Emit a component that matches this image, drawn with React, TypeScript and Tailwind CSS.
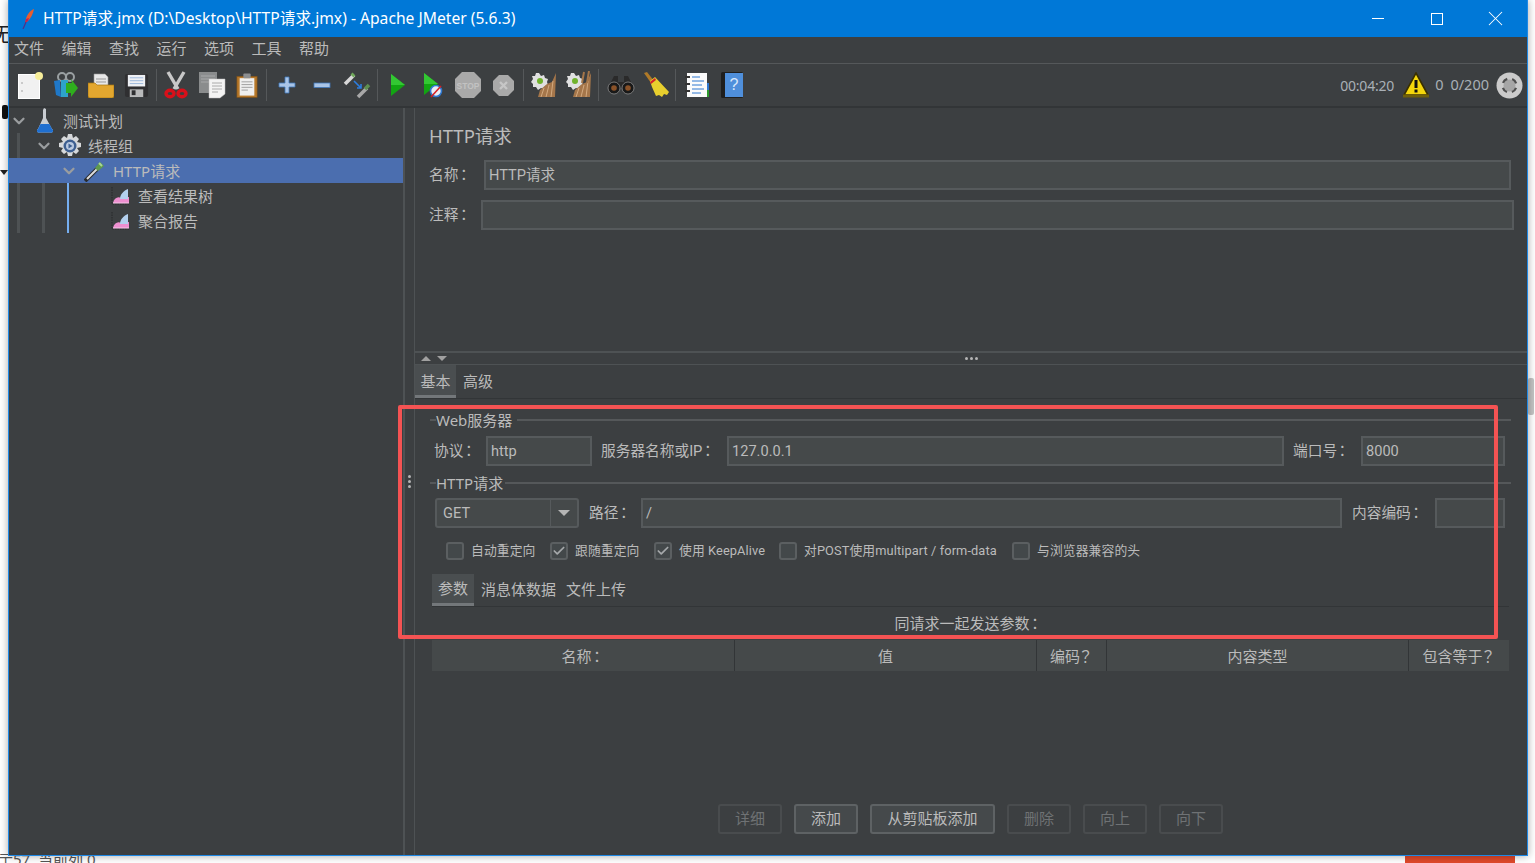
import type { ReactNode } from "react";
import { Check, ChevronDown, X } from "lucide-react";

const Sep = ({ className = "mx-[2px]" }: { className?: string }) => <div className={`my-[3px] w-px h-[32px] bg-[#55585a] ${className}`} />;

const Slot = ({ children }: { children: ReactNode }) => (
  <div className="w-[35.2px] h-[43px] flex items-center justify-center shrink-0 [&>svg]:shrink-0">{children}</div>
);

// fullwidth colon and question mark sit in the middle of the cell, as in the TC cut
const P = ({ c }: { c: string }) => <span className="ml-[-2px] font-['Noto_Sans_CJK_TC',sans-serif]">{c}</span>;

const NewIcon = () => (
  <svg width="27" height="28" viewBox="0 0 27 28">
    <rect x="1.5" y="3.5" width="21" height="24" fill="#f1f1f1" stroke="#fff" />
    <circle cx="5" cy="12" r="0.8" fill="#999" />
    <circle cx="5" cy="20" r="0.8" fill="#999" />
    <circle cx="22" cy="5" r="4" fill="#f7ee9a" />
  </svg>
);
const TemplatesIcon = () => (
  <svg width="26" height="28" viewBox="0 0 26 28">
    <circle cx="9" cy="6" r="4" fill="none" stroke="#9aa0a2" strokeWidth="2" />
    <circle cx="17" cy="6" r="4" fill="none" stroke="#9aa0a2" strokeWidth="2" />
    <path d="M1 10l6-1 1 17-5-2z" fill="#1f78c8" />
    <path d="M8 9h7v17H8z" fill="#2ea3c9" />
    <path d="M13 12h6l-1-4 7 9-7 9v-4h-5z" fill="#2fae1d" />
  </svg>
);
const OpenIcon = () => (
  <svg width="26" height="25" viewBox="0 0 26 25">
    <path d="M6 1h11l3 3v10H6z" fill="#e8e8e8" stroke="#999" strokeWidth="0.6" />
    <path d="M8 6h10M8 9h10" stroke="#999" />
    <path d="M0 10h7l2 2h17v11a2 2 0 0 1-2 2H2a2 2 0 0 1-2-2z" fill="#e3a72f" stroke="#a6760f" strokeWidth="0.7" />
  </svg>
);
const SaveIcon = () => (
  <svg width="25" height="25" viewBox="0 0 26 26">
    <rect x="1" y="1" width="24" height="24" rx="2" fill="#2f2f31" />
    <rect x="4" y="2" width="18" height="12" fill="#eef0f4" />
    <path d="M6 5h14M6 8h14M6 11h14" stroke="#9cb8dc" />
    <rect x="6" y="17" width="14" height="8" fill="#b9babb" />
    <rect x="8" y="18" width="4" height="5" fill="#2f2f31" />
  </svg>
);
const CutIcon = () => (
  <svg width="24" height="28" viewBox="0 0 24 28">
    <path d="M4 1l10 17M20 1L10 18" stroke="#c8c8c8" strokeWidth="3.4" />
    <ellipse cx="6" cy="22.5" rx="4" ry="3.2" fill="none" stroke="#d8101a" strokeWidth="3.4" />
    <ellipse cx="18" cy="22.5" rx="4" ry="3.2" fill="none" stroke="#d8101a" strokeWidth="3.4" />
  </svg>
);
const CopyIcon = () => (
  <svg width="28" height="28" viewBox="0 0 28 28">
    <rect x="1" y="1" width="18" height="21" fill="#8a8c8d" />
    <path d="M3 5h14M3 8h14M3 11h14" stroke="#a8a9aa" />
    <path d="M11 8h16v15l-5 4H11z" fill="#f3f3f3" stroke="#bbb" strokeWidth="0.5" />
    <path d="M14 12h10M14 15h10M14 18h10M14 21h6" stroke="#aaa" />
  </svg>
);
const PasteIcon = () => (
  <svg width="22" height="27" viewBox="0 0 24 28">
    <rect x="1" y="4" width="22" height="23" fill="#b6782a" stroke="#7f5118" strokeWidth="0.7" />
    <rect x="4" y="6" width="16" height="19" fill="#efefef" />
    <rect x="8" y="1" width="8" height="5" rx="1" fill="#8c8e90" />
    <path d="M6 10h12M6 13h12M6 16h12M6 19h7" stroke="#9a9a9a" />
  </svg>
);
const PlusIcon = () => (
  <svg width="18" height="18" viewBox="0 0 18 18">
    <path d="M7 1h4v6h6v4h-6v6H7v-6H1V7h6z" fill="#a9c4e6" stroke="#3f78bb" strokeWidth="0.8" />
  </svg>
);
const MinusIcon = () => (
  <svg width="18" height="18" viewBox="0 0 18 18">
    <rect x="1" y="7" width="16" height="4.5" fill="#a9c4e6" stroke="#3f78bb" strokeWidth="0.8" />
  </svg>
);
const ToggleIcon = () => (
  <svg width="28" height="28" viewBox="0 0 28 28">
    <path d="M2 13L11 4" stroke="#d8d8d8" strokeWidth="3.5" />
    <path d="M9 5l2-2" stroke="#6fa85a" strokeWidth="4" />
    <path d="M15 26l9-9" stroke="#a8a8a8" strokeWidth="3.5" />
    <path d="M22 18l4-4" stroke="#5e8f50" strokeWidth="3.5" />
    <path d="M11 10l7 7M18 13v4h-4" stroke="#2b7de0" strokeWidth="1.6" fill="none" />
  </svg>
);
const RunIcon = () => (
  <svg className="ml-[2px]" width="16" height="24" viewBox="0 0 16 24">
    <path d="M1 1l14 11L1 23z" fill="#12a512" />
    <path d="M1 1l14 11H1z" fill="#33c733" />
  </svg>
);
const RunNoPauseIcon = () => (
  <svg className="ml-[1px]" width="20" height="26" viewBox="0 0 20 26">
    <path d="M1 1l14 11L1 23z" fill="#12a512" />
    <path d="M1 1l14 11H1z" fill="#33c733" />
    <circle cx="13" cy="19" r="5.5" fill="#e9eef5" stroke="#2f78d0" strokeWidth="1.6" />
    <path d="M8 25l10-11" stroke="#d51f26" strokeWidth="1.6" />
  </svg>
);
const StopIcon = () => (
  <svg width="28" height="28" viewBox="0 0 28 28">
    <path d="M8 1h12l7 7v12l-7 7H8l-7-7V8z" fill="#a9a9a9" />
    <text x="14" y="17.5" textAnchor="middle" fontSize="8.5" fontFamily="Liberation Sans, sans-serif" fontWeight="700" fill="#c2c2c2">
      STOP
    </text>
  </svg>
);
const ShutdownIcon = () => (
  <svg width="23" height="23" viewBox="0 0 23 23">
    <path d="M7 1h9l6 6v9l-6 6H7l-6-6V7z" fill="#a9a9a9" />
    <path d="M8 8l7 7M15 8l-7 7" stroke="#c6c6c6" strokeWidth="2.4" />
  </svg>
);
const ClearIcon = ({ all }: { all?: boolean }) => (
  <svg width="28" height="28" viewBox="0 0 28 28">
    <path d="M10 2l2 3 3-1 1 3 3 1-1 3 1 3-3 1-1 3-3-1-3 2-2-3-3 0 0-3-2-2 2-3-1-3 3 0 1-3z" fill="#e0e0e0" />
    <circle cx="11" cy="10" r="3" fill="#70b22c" />
    <path d="M27 2l-1 24H9l2-7 7-6 5-2z" fill="#a5764a" />
    <path d="M15 17l-3 9M20 14l-3 12M24 10l-2 16" stroke="#d3aa80" />
    {all && <path d="M20 1l-2 11M25 0l-2 12" stroke="#a5764a" strokeWidth="2" />}
  </svg>
);
const SearchIcon = () => (
  <svg width="28" height="20" viewBox="0 0 28 20">
    <path d="M7 1h4v6h6V1h4l6 12H1z" fill="#2a2a2a" />
    <circle cx="7" cy="13" r="6" fill="#191919" stroke="#999" strokeWidth="0.7" />
    <circle cx="21" cy="13" r="6" fill="#191919" stroke="#999" strokeWidth="0.7" />
    <circle cx="7" cy="13" r="2.8" fill="#8a5228" />
    <circle cx="21" cy="13" r="2.8" fill="#8a5228" />
  </svg>
);
const BroomIcon = () => (
  <svg width="28" height="28" viewBox="0 0 28 28">
    <path d="M2 2l3-1 7 9-3 2z" fill="#b07a28" />
    <path d="M8 10l5-4 14 15-2 3-3-1-2 3-3-2-3 1-4-9z" fill="#e8cf2e" />
    <path d="M8 11l5-4 1 2-5 4z" fill="#d3232a" />
  </svg>
);
const FunctionIcon = () => (
  <svg width="26" height="26" viewBox="0 0 26 26">
    <rect x="3" y="1" width="20" height="24" fill="#fbfbfb" />
    <rect x="23" y="11" width="2" height="7" fill="#2f78d0" />
    <rect x="23" y="18" width="2" height="7" fill="#2e9b2e" />
    <path d="M8 5h8M8 9h12M8 13h10M8 17h12M8 21h9" stroke="#2f78d0" />
    <path d="M1 5h5M1 12h5M1 19h5" stroke="#333" strokeWidth="2" />
  </svg>
);
const HelpIcon = () => (
  <svg width="22" height="26" viewBox="0 0 22 26">
    <rect x="0" y="0" width="22" height="26" rx="1.5" fill="#1f1f1f" />
    <rect x="4" y="1" width="18" height="24" fill="#4f8fdb" />
    <text x="13" y="18" textAnchor="middle" fontSize="16" fontFamily="Liberation Sans, sans-serif" fill="#d9e8fa">
      ?
    </text>
  </svg>
);
const WarnIcon = () => (
  <svg width="28" height="26" viewBox="0 0 28 26">
    <path d="M14 1L26 23H2z" fill="#f4d60c" stroke="#3a3000" strokeWidth="1.6" />
    <rect x="1" y="22.5" width="26" height="3" fill="#6f5f0c" />
    <rect x="12.5" y="8" width="3" height="8" fill="#111" />
    <rect x="12.5" y="17.5" width="3" height="3" fill="#111" />
  </svg>
);
const ExpandIcon = () => (
  <svg width="27" height="27" viewBox="0 0 27 27">
    <circle cx="13.5" cy="13.5" r="13" fill="#cbcbcb" />
    <circle cx="13.5" cy="13.5" r="6" fill="#a6a6a6" />
    <circle cx="13.5" cy="13.5" r="7" fill="none" stroke="#4f4f4f" strokeWidth="2.2" strokeDasharray="6 5" strokeDashoffset="-2.5" />
  </svg>
);
const Feather = () => (
  <svg width="13" height="20" viewBox="0 0 13 20">
    <path d="M12 0C9 1 5 5 4 10l-1 4 3-2c3-3 5-7 6-12z" fill="#e85d2f" />
    <path d="M4 10l-1 4 3-2 1-3z" fill="#c81f4f" />
    <path d="M4 13L1 20" stroke="#50308a" strokeWidth="1.2" />
  </svg>
);
const PlanIcon = () => (
  <svg width="16" height="25" viewBox="0 0 16 25">
    <path d="M7 0l2 1v9l6 11a2 2 0 0 1-2 3.5H3A2 2 0 0 1 1 21l5-11V2z" fill="#c9cdd2" />
    <path d="M3.5 16h9l2.5 5a2 2 0 0 1-2 3.5H3A2 2 0 0 1 1 21z" fill="#1f6fd0" />
  </svg>
);
const GearIcon = () => (
  <svg width="24" height="24" viewBox="0 0 24 24">
    <path d="M10 0h4l1 4 3-2 3 3-2 3 4 1v4l-4 1 2 3-3 3-3-2-1 4h-4l-1-4-3 2-3-3 2-3-4-1v-4l4-1-2-3 3-3 3 2z" fill="#d6d8da" />
    <circle cx="12" cy="12" r="6.5" fill="#3d5f91" />
    <circle cx="12" cy="12" r="4" fill="#b9c9e0" />
    <path d="M10.5 9.5l4 2.5-4 2.5z" fill="#3d5f91" />
  </svg>
);
const SamplerIcon = () => (
  <svg width="22" height="22" viewBox="0 0 22 22">
    <path d="M1 21L13 9" stroke="#2a2c2e" strokeWidth="4" />
    <path d="M3 19L13 9" stroke="#dcdcdc" strokeWidth="2" />
    <path d="M11 8l5-6 4 4-6 5z" fill="#5f9a4d" />
    <path d="M15 3l3 3" stroke="#a9d696" strokeWidth="2" />
  </svg>
);
const ListenerIcon = () => (
  <svg width="19" height="18" viewBox="0 0 19 18">
    <path d="M1 0v17h18" fill="none" stroke="#26282a" strokeDasharray="1.5 1" />
    <path d="M2 16c1-5 5-7 8-5l8-1v6z" fill="#ee8fd0" />
    <path d="M9 12c0-4 3-8 8-10v10z" fill="#b3d0ee" />
    <path d="M2 16h16" stroke="#f6c6e8" />
  </svg>
);

const TreeRow = ({
  depth,
  icon,
  label,
  open,
  selected,
}: {
  depth: number;
  icon: ReactNode;
  label: string;
  open?: boolean;
  selected?: boolean;
}) => (
  <div className={`flex h-[25px] items-stretch ${selected ? "bg-[#4b6eaf]" : ""}`}>
    {Array.from({ length: depth }).map((_, i) => (
      <div key={i} className="w-[25px] shrink-0 pl-[8px]">
        {!selected && <div className={`h-full ${i === 2 ? "w-[2px] bg-[#75aef0]" : "w-[3px] bg-[#4e5254]"}`} />}
      </div>
    ))}
    <div className="w-[20px] shrink-0 flex items-center justify-center text-[#9a9d9f]">
      {open && <ChevronDown size={18} strokeWidth={3} />}
    </div>
    <div className="ml-[6px] w-[20px] shrink-0 flex items-center justify-center [&>svg]:shrink-0">{icon}</div>
    <span className="ml-[8px] text-[15px] leading-[26px] text-[#bbbbbb]">{label}</span>
  </div>
);

const Field = ({ value, className }: { value?: string; className: string }) => (
  <div
    className={`h-[30px] flex items-center px-[3px] pt-[2px] bg-[#45494a] border-2 border-[#565a5c] font-['Roboto','Noto_Sans_CJK_SC',sans-serif] text-[14.6px] text-[#bbbbbb] ${className}`}
  >
    {value}
  </div>
);

const Label = ({ text, className = "" }: { text: string; className?: string }) => (
  <span className={`font-['Roboto','Noto_Sans_CJK_SC',sans-serif] text-[14.7px] text-[#bbbbbb] whitespace-nowrap ${className}`}>
    {text}
    <P c="：" />
  </span>
);

const Legend = ({ title, width }: { title: string; width: string }) => (
  <div className="flex items-center h-[22px] ml-[15px] mr-[16px]">
    <div className="w-[6px] h-[2px] bg-[#55585a]" />
    <span className={`text-[15px] text-[#bbbbbb] whitespace-nowrap ${width}`}>{title}</span>
    <div className="flex-1 h-[2px] bg-[#55585a]" />
  </div>
);

const Tick = ({ label, checked, className }: { label: string; checked?: boolean; className: string }) => (
  <div className={`flex items-center gap-[7px] ${className}`}>
    <div className="w-[18px] h-[18px] rounded-[3px] border-2 border-[#5b5f61] bg-[#43484a] flex items-center justify-center text-[#a5a8aa]">
      {checked && <Check size={14} strokeWidth={3} />}
    </div>
    <span className="pb-[1px] font-['Roboto','Noto_Sans_CJK_SC',sans-serif] text-[12.8px] tracking-[0.1px] text-[#bbbbbb] whitespace-nowrap">{label}</span>
  </div>
);

const Button = ({ label, on, className }: { label: string; on?: boolean; className: string }) => (
  <div
    className={`h-[30px] pb-[1px] rounded-[3px] border-2 flex items-center justify-center text-[15px] ${
      on ? "border-[#5e6264] bg-[#45494b] text-[#bbbbbb]" : "border-[#494c4e] text-[#6f7274]"
    } ${className}`}
  >
    {label}
  </div>
);

const HeadCell = ({ children, className }: { children: ReactNode; className: string }) => (
  <div className={`pt-[1px] flex items-center justify-center text-[15px] text-[#bbbbbb] border-r border-[#323537] ${className}`}>{children}</div>
);

export default function App() {
  return (
    <div className="relative w-[1535px] h-[863px] overflow-hidden bg-white font-['Noto_Sans','Noto_Sans_CJK_SC',sans-serif]">
      {/* desktop behind the window */}
      <span className="absolute left-[-8px] top-[20px] text-[20px] text-[#222]">无</span>
      <div className="absolute left-[2px] top-[105px] w-[6px] h-[14px] rounded-[2px] bg-[#111]" />
      <div className="absolute left-[0px] top-[170px] w-0 h-0 border-x-[4px] border-t-[5px] border-x-transparent border-t-[#222]" />
      <span className="absolute left-[-2px] top-[849px] text-[15px] leading-[20px] text-[#555] whitespace-nowrap">亍57, 当前列 0</span>
      <div className="absolute left-[1405px] top-[855px] w-[110px] h-[8px] bg-[#e0492b]" />
      <div className="absolute left-[1528px] top-[378px] w-[6px] h-[37px] rounded-[2px] bg-[#c4c4c4]" />

      <div className="absolute left-[8px] top-0 w-[1520px] h-[856px] flex flex-col bg-[#3c3f41] border-x border-b border-[#1e88e5] shadow-[0_0_8px_rgba(0,0,0,0.35)]">
        <div className="h-[37px] shrink-0 bg-[#0078d7] flex items-center text-white">
          <div className="ml-[13px] mr-[8px] flex">
            <Feather />
          </div>
          <span className="text-[15.65px] whitespace-nowrap">HTTP请求.jmx (D:\Desktop\HTTP请求.jmx) - Apache JMeter (5.6.3)</span>
          <div className="ml-auto pr-[2px] flex items-center">
            <div className="w-[59px] flex justify-center"><div className="w-[12px] h-px bg-white" /></div>
            <div className="w-[59px] flex justify-center"><div className="w-[12px] h-[12px] border border-white" /></div>
            <div className="w-[59px] flex justify-center"><X size={25} strokeWidth={1} /></div>
          </div>
        </div>

        <div className="h-[27px] shrink-0 flex items-center gap-[17.5px] pl-[5px] pb-[3px] border-b border-[#55585a] text-[15px] text-[#bbbbbb]">
          {["文件", "编辑", "查找", "运行", "选项", "工具", "帮助"].map((m) => (
            <span key={m}>{m}</span>
          ))}
        </div>

        <div className="h-[44px] shrink-0 flex items-center pl-[4px] pr-[4px] border-b-2 border-[#323537]">
          <Slot><NewIcon /></Slot>
          <Slot><TemplatesIcon /></Slot>
          <Slot><OpenIcon /></Slot>
          <Slot><SaveIcon /></Slot>
          <Sep />
          <Slot><CutIcon /></Slot>
          <Slot><CopyIcon /></Slot>
          <Slot><PasteIcon /></Slot>
          <Sep />
          <Slot><PlusIcon /></Slot>
          <Slot><MinusIcon /></Slot>
          <Slot><ToggleIcon /></Slot>
          <Sep />
          <Slot><RunIcon /></Slot>
          <Slot><RunNoPauseIcon /></Slot>
          <Slot><StopIcon /></Slot>
          <Slot><ShutdownIcon /></Slot>
          <Sep />
          <Slot><ClearIcon /></Slot>
          <Slot><ClearIcon all /></Slot>
          <Sep className="ml-[2px] mr-[4px]" />
          <Slot><SearchIcon /></Slot>
          <Slot><BroomIcon /></Slot>
          <Sep className="ml-[2px] mr-[3px]" />
          <Slot><FunctionIcon /></Slot>
          <Slot><HelpIcon /></Slot>
          <div className="ml-auto flex items-center text-[14.5px] text-[#a9b0b6]">
            <span className="text-[14px] tracking-[-0.2px]">00:04:20</span>
            <span className="ml-[8px] flex"><WarnIcon /></span>
            <span className="ml-[5px]">0</span>
            <span className="ml-[7px]">0/200</span>
            <span className="ml-[7px] flex"><ExpandIcon /></span>
          </div>
        </div>

        <div className="flex-1 min-h-0 flex">
          <div className="w-[394px] shrink-0">
            <TreeRow depth={0} open icon={<PlanIcon />} label="测试计划" />
            <TreeRow depth={1} open icon={<GearIcon />} label="线程组" />
            <TreeRow depth={2} open selected icon={<SamplerIcon />} label="HTTP请求" />
            <TreeRow depth={3} icon={<ListenerIcon />} label="查看结果树" />
            <TreeRow depth={3} icon={<ListenerIcon />} label="聚合报告" />
          </div>

          <div className="w-[12px] shrink-0 border-l-2 border-r border-[#4e5254] flex items-center justify-center">
            <div className="flex flex-col gap-[2px]">
              <div className="w-[3px] h-[3px] rounded-full bg-[#b5b5b5]" />
              <div className="w-[3px] h-[3px] rounded-full bg-[#b5b5b5]" />
              <div className="w-[3px] h-[3px] rounded-full bg-[#b5b5b5]" />
            </div>
          </div>

          <div className="flex-1 min-w-0 flex flex-col">
            <div className="h-[245px] shrink-0 pl-[14px] border-b-2 border-[#4e5254]">
              <div className="h-[52px] pt-[4px] flex items-center text-[18.5px] text-[#bbbbbb]">HTTP请求</div>
              <div className="flex items-center h-[30px]">
                <Label text="名称" className="w-[55px]" />
                <Field value="HTTP请求" className="w-[1027px]" />
              </div>
              <div className="flex items-center h-[30px] mt-[10px]">
                <Label text="注释" className="w-[52px]" />
                <Field className="w-[1033px]" />
              </div>
            </div>

            <div className="h-[12px] shrink-0 pb-[1px] relative flex items-center border-b border-[#4e5254] pl-[6px] gap-[6px]">
              <div className="w-0 h-0 border-x-[5px] border-b-[5px] border-x-transparent border-b-[#a0a0a0]" />
              <div className="w-0 h-0 border-x-[5px] border-t-[5px] border-x-transparent border-t-[#a0a0a0]" />
              <div className="ml-[512px] flex gap-[2px]">
                <div className="w-[3px] h-[3px] rounded-full bg-[#b5b5b5]" />
                <div className="w-[3px] h-[3px] rounded-full bg-[#b5b5b5]" />
                <div className="w-[3px] h-[3px] rounded-full bg-[#b5b5b5]" />
              </div>
            </div>

            <div className="h-[34px] shrink-0 flex border-b border-[#323537] text-[15px] text-[#bbbbbb]">
              <div className="w-[41px] pt-[2px] bg-[#4a4e50] border-b-[3px] border-[#73777a] flex items-center justify-center">基本</div>
              <div className="ml-[7px] flex items-center">高级</div>
            </div>

            <div className="pt-[10px]">
              <Legend title="Web服务器" width="w-[81px]" />
              <div className="flex items-center mt-[5px] ml-[19px]">
                <Label text="协议" className="w-[52px]" />
                <Field value="http" className="w-[106px]" />
                <Label text="服务器名称或IP" className="ml-[9px] w-[126px]" />
                <Field value="127.0.0.1" className="w-[557px]" />
                <Label text="端口号" className="ml-[9px] w-[68px]" />
                <Field value="8000" className="w-[144px]" />
              </div>

              <div className="mt-[6px]">
                <Legend title="HTTP请求" width="w-[69px]" />
              </div>
              <div className="flex items-center mt-[4px] ml-[20px]">
                <div className="w-[144px] h-[30px] flex rounded-[3px] border-2 border-[#565a5c] bg-[#45494a] font-['Roboto',sans-serif] text-[14.6px] text-[#bbbbbb]">
                  <div className="w-[113px] pl-[6px] pt-[2px] flex items-center">GET</div>
                  <div className="flex-1 border-l border-[#565a5c] flex items-center justify-center">
                    <div className="w-0 h-0 border-x-[6px] border-t-[6px] border-x-transparent border-t-[#b5b5b5]" />
                  </div>
                </div>
                <Label text="路径" className="ml-[10px] w-[52px]" />
                <Field value="/" className="w-[701px]" />
                <Label text="内容编码" className="ml-[10px] w-[83px]" />
                <Field className="w-[70px]" />
              </div>

              <div className="flex items-center h-[18px] mt-[14px] ml-[31px]">
                <Tick label="自动重定向" className="w-[104px]" />
                <Tick label="跟随重定向" checked className="w-[104px]" />
                <Tick label="使用 KeepAlive" checked className="w-[125px]" />
                <Tick label="对POST使用multipart / form-data" className="w-[233px]" />
                <Tick label="与浏览器兼容的头" className="w-[130px]" />
              </div>

              <div className="h-[33px] mt-[14px] ml-[17px] mr-[18px] flex items-stretch border-b border-[#323537] text-[15px] text-[#bbbbbb]">
                <div className="w-[42px] bg-[#4a4e50] border-b-[3px] border-[#73777a] flex items-center justify-center">参数</div>
                <div className="ml-[7px] pb-[2px] flex items-center">消息体数据</div>
                <div className="ml-[10px] pb-[2px] flex items-center">文件上传</div>
              </div>

              <div className="h-[33px] flex items-center justify-center pr-[5px] text-[15px] text-[#bbbbbb]">
                同请求一起发送参数
                <P c="：" />
              </div>

              <div className="h-[31px] ml-[17px] mr-[18px] flex items-stretch bg-[#45494a]">
                <HeadCell className="w-[303px]">名称<P c="：" /></HeadCell>
                <HeadCell className="w-[302px]">值</HeadCell>
                <HeadCell className="w-[70px]">编码<P c="？" /></HeadCell>
                <HeadCell className="w-[302px]">内容类型</HeadCell>
                <div className="flex-1 pt-[1px] flex items-center justify-center text-[15px] text-[#bbbbbb]">包含等于<P c="？" /></div>
              </div>
            </div>

            <div className="mt-auto mb-[21px] pl-[303px] flex gap-[12px]">
              <Button label="详细" className="w-[64px]" />
              <Button label="添加" on className="w-[64px]" />
              <Button label="从剪贴板添加" on className="w-[125px]" />
              <Button label="删除" className="w-[64px]" />
              <Button label="向上" className="w-[64px]" />
              <Button label="向下" className="w-[64px]" />
            </div>
          </div>
        </div>
      </div>

      {/* red annotation drawn over the screenshot */}
      <div className="absolute left-[398px] top-[405px] w-[1100px] h-[234px] rounded-[2px] border-[4px] border-[#f45353]" />
    </div>
  );
}
